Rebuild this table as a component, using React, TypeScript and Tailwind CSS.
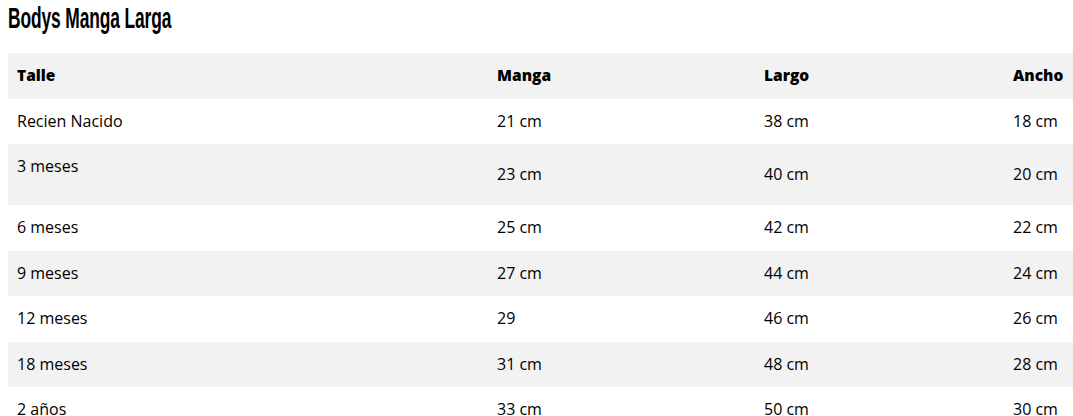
const rows: [string, string, string, string, boolean?][] = [
  ['Recien Nacido', '21 cm', '38 cm', '18 cm'],
  ['3 meses', '23 cm', '40 cm', '20 cm', true],
  ['6 meses', '25 cm', '42 cm', '22 cm'],
  ['9 meses', '27 cm', '44 cm', '24 cm'],
  ['12 meses', '29', '46 cm', '26 cm'],
  ['18 meses', '31 cm', '48 cm', '28 cm'],
  ['2 años', '33 cm', '50 cm', '30 cm'],
]

export default function App() {
  return (
    <div className="min-h-[416px] bg-white pl-[8px] text-black overflow-hidden" style={{ fontFamily: '"Open Sans", sans-serif' }}>
      <h2 className="h-[53px] pt-[1px]">
        <span
          className="inline-block origin-left scale-x-[0.6] text-[29px] leading-[34px] font-bold tracking-[-0.2px] whitespace-nowrap"
          style={{ fontFamily: '"Liberation Sans", sans-serif' }}
        >
          Bodys Manga Larga
        </span>
      </h2>
      <table className="w-[1065px] table-fixed border-collapse text-[16px] leading-[15.5px] font-medium">
        <colgroup>
          <col className="w-[480px]" />
          <col className="w-[267px]" />
          <col className="w-[249px]" />
          <col className="w-[69px]" />
        </colgroup>
        <thead>
          <tr className="bg-[#f2f2f2] text-[15.5px]">
            <th className="pl-[9px] py-[15px] text-left font-extrabold">Talle</th>
            <th className="pl-[9px] py-[15px] text-left font-extrabold">Manga</th>
            <th className="pl-[9px] py-[15px] text-left font-extrabold">Largo</th>
            <th className="pl-[9px] py-[15px] text-left font-extrabold">Ancho</th>
          </tr>
        </thead>
        <tbody>
          {rows.map(([talle, manga, largo, ancho, extra], i) => (
            <tr key={talle} className={i % 2 === 1 ? 'bg-[#f2f2f2]' : 'bg-white'}>
              <td className="pl-[9px] py-[15px] align-middle">
                {talle}
                {extra && (
                  <>
                    <br />
                    {'\u00a0'}
                  </>
                )}
              </td>
              <td className="pl-[9px] py-[15px] align-middle">{manga}</td>
              <td className="pl-[9px] py-[15px] align-middle">{largo}</td>
              <td className="pl-[9px] py-[15px] align-middle whitespace-nowrap">{ancho}</td>
            </tr>
          ))}
        </tbody>
      </table>
    </div>
  )
}
